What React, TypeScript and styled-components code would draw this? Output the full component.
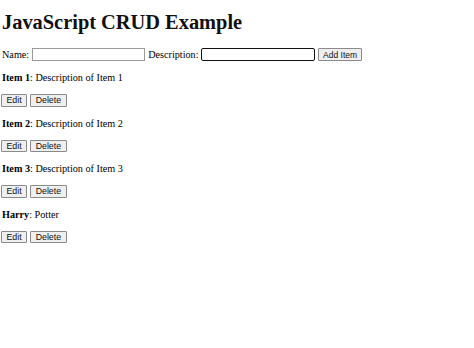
import React from "react";
import styled, { createGlobalStyle } from "styled-components";

const Global = createGlobalStyle`
  html, body { margin: 0; padding: 0; background: #fff; }
  body {
    font-family: "Liberation Serif", "Times New Roman", serif;
    font-size: 10.2px;
    color: #000;
  }
`;

const Page = styled.div`
  padding: 0 2px;
  display: flex;
  flex-direction: column;
`;

const Title = styled.h1`
  margin: 10px 0 0 0;
  font-size: 20.4px;
  line-height: 24px;
  font-weight: bold;
  color: #111;
`;

const FormRow = styled.div`
  display: flex;
  align-items: center;
  margin-top: 14px;
  height: 13px;
  white-space: nowrap;
`;

const Label = styled.label`
  line-height: 12px;
  margin-right: 2.5px;
`;

const Field = styled.input<{ $focused?: boolean }>`
  box-sizing: border-box;
  width: 113.5px;
  height: 13px;
  margin: 0 3px 0 0;
  padding: 0 2px;
  font-size: 9px;
  border: ${(p) => (p.$focused ? "1.5px solid #111" : "1px solid #9a9a9a")};
  border-radius: ${(p) => (p.$focused ? "2px" : "0")};
  outline: none;
  background: #fff;
`;

const Button = styled.button`
  box-sizing: border-box;
  height: 12.5px;
  padding: 0 4.5px;
  margin: 0;
  font-family: "Liberation Sans", Arial, sans-serif;
  font-size: 8.8px;
  line-height: 10px;
  color: #111;
  background: #efefef;
  border: 1px solid #8a8a8a;
  border-radius: 1px;
`;

const AddButton = styled(Button)`
  height: 13px;
  padding: 0 4px;
  font-size: 8.5px;
  margin-left: 0.5px;
`;

const Item = styled.div`
  display: flex;
  flex-direction: column;
`;

const ItemText = styled.p`
  margin: 11px 0 0 0;
  line-height: 12px;
`;

const Actions = styled.div`
  display: flex;
  gap: 3px;
  margin: 10px 0 0 -1px;
`;

const items = [
  { name: "Item 1", description: "Description of Item 1" },
  { name: "Item 2", description: "Description of Item 2" },
  { name: "Item 3", description: "Description of Item 3" },
  { name: "Harry", description: "Potter" },
];

export default function App() {
  return (
    <>
      <Global />
      <Page>
        <Title>JavaScript CRUD Example</Title>
        <FormRow>
          <Label>Name:</Label>
          <Field type="text" />
          <Label>Description:</Label>
          <Field type="text" $focused />
          <AddButton>Add Item</AddButton>
        </FormRow>
        {items.map((it) => (
          <Item key={it.name}>
            <ItemText>
              <strong>{it.name}</strong>: {it.description}
            </ItemText>
            <Actions>
              <Button>Edit</Button>
              <Button>Delete</Button>
            </Actions>
          </Item>
        ))}
      </Page>
    </>
  );
}
